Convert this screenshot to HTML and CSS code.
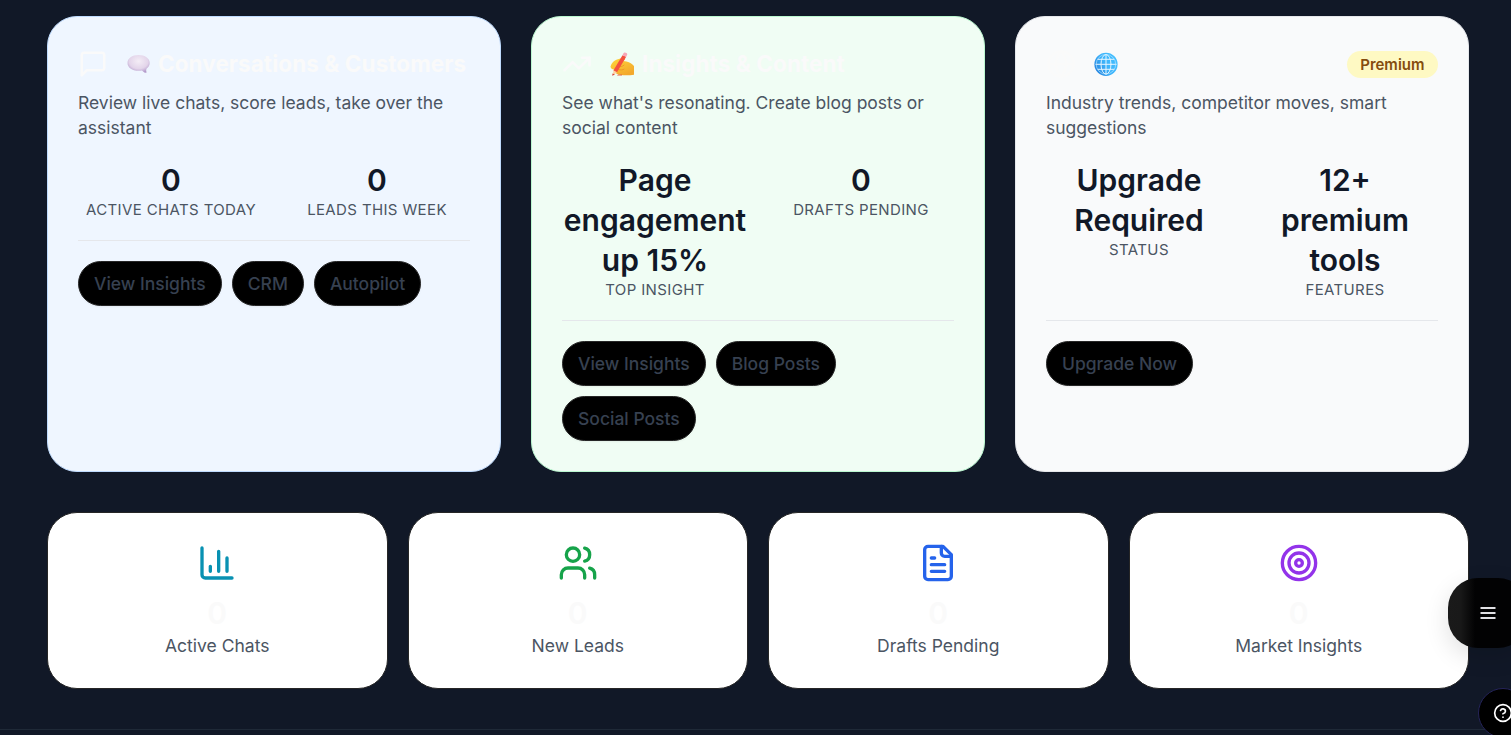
FILE: index.html
```html
<!DOCTYPE html>
<html lang="en">
<head>
<meta charset="utf-8">
<title>Dashboard</title>
<link rel="stylesheet" href="styles.css">
</head>
<body>
<main class="page">
  <section class="hubs">
    <article class="hub hub-blue">
      <header class="hub-head">
        <svg class="hub-icon" viewBox="0 0 24 24"><path d="M21 15a2 2 0 0 1-2 2H7l-4 4V5a2 2 0 0 1 2-2h14a2 2 0 0 1 2 2z"/></svg>
        <svg class="emoji" viewBox="0 0 24 24">
          <defs><radialGradient id="bubble" cx=".5" cy=".35" r=".65"><stop offset="0" stop-color="#f4edf6"/><stop offset=".65" stop-color="#e3d5ea"/><stop offset="1" stop-color="#b49bcb"/></radialGradient></defs>
          <path fill="url(#bubble)" d="M12.500 3C6 3 1.500 6.500 1.500 11s4.500 7.800 11 7.800c1.300 0 2.500-.1 3.500-.4 1 1.200 2.400 2.300 4 2.400.6 0 .6-.6.4-1.100-.3-.9-.3-2 .1-3 2-1.500 3.200-3.400 3.200-5.700 0-4.500-4.700-8-11.200-8z"/>
        </svg>
        <h3 class="hub-title">Conversations &amp; Customers</h3>
      </header>
      <p class="hub-desc">Review live chats, score leads, take over the assistant</p>
      <div class="stats">
        <div class="stat"><div class="stat-value">0</div><div class="stat-label">Active chats today</div></div>
        <div class="stat"><div class="stat-value">0</div><div class="stat-label">Leads this week</div></div>
      </div>
      <div class="actions"><button class="pill">View Insights</button><button class="pill">CRM</button><button class="pill">Autopilot</button></div>
    </article>

    <article class="hub hub-green">
      <header class="hub-head">
        <svg class="hub-icon" viewBox="0 0 24 24"><path d="M22 7l-8.500 8.500-5-5L2 17"/><path d="M16 7h6v6"/></svg>
        <svg class="emoji" viewBox="0 0 24 24">
          <defs><linearGradient id="hand" x1="0" y1="0" x2=".6" y2="1"><stop offset="0" stop-color="#ffd83b"/><stop offset="1" stop-color="#f3a92c"/></linearGradient></defs>
          <path fill="url(#hand)" d="M.5 14.500C1.500 11 4 8.500 7 7.500l6-1.700c2-.3 2.800 1.500 1.200 2.500l-1 .8 3.300.3c3.500.6 5.500 2.600 7.500 4.600v8.700c-3 .4-6 .6-9 .5-5 0-9-1-10-3.200-.5-1-.3-2 .2-2.800C3.500 18 1 17.500.5 14.500z"/>
          <path fill="none" stroke="#e99223" stroke-width=".8" d="M8 14.500c2 .6 4.500.1 6-1.300M8.500 17.500c2 .8 4 .5 5.500-.3"/>
          <path fill="#f4513f" d="M12.500 3.200l3.700 1.600L7 20.200 3.400 18.400z"/>
          <path fill="#f7a6b6" d="M12.500 3.200l1-1.900c.7-1.600 4.300-.2 3.700 1.500l-1 2z"/>
          <path fill="#ffd0a0" d="M3.400 18.400L7 20.200l-4 3.100z"/><path fill="#d9483b" d="M2.500 21.500l2.500.9-2.800 1.400z"/>
          <path fill="#e5623e" d="M8 22.500h4v1H7z"/>
        </svg>
        <h3 class="hub-title">Insights &amp; Content</h3>
      </header>
      <p class="hub-desc">See what's resonating. Create blog posts or social content</p>
      <div class="stats">
        <div class="stat"><div class="stat-value">Page engagement up 15%</div><div class="stat-label">Top insight</div></div>
        <div class="stat"><div class="stat-value">0</div><div class="stat-label">Drafts pending</div></div>
      </div>
      <div class="actions"><button class="pill">View Insights</button><button class="pill">Blog Posts</button><button class="pill">Social Posts</button></div>
    </article>

    <article class="hub hub-gray">
      <header class="hub-head">
        <svg class="hub-icon" viewBox="0 0 24 24"><circle cx="12" cy="12" r="10"/><path d="M12 2a14.500 14.500 0 0 0 0 20 14.500 14.500 0 0 0 0-20M2 12h20"/></svg>
        <svg class="emoji" viewBox="0 0 24 24">
          <defs><linearGradient id="globe" x1="0" y1=".8" x2="1" y2=".2"><stop offset="0" stop-color="#2580dc"/><stop offset=".5" stop-color="#3db4fb"/><stop offset="1" stop-color="#45c0ff"/></linearGradient></defs>
          <circle cx="12" cy="12.300" r="11.600" fill="url(#globe)"/>
          <g fill="none" stroke="#e6f6ff" stroke-width="1"><ellipse cx="12" cy="12.300" rx="5" ry="9.800"/><path d="M12 2.500v19.600M2 12.300h20M4 7.300h16M4 17.300h16"/></g>
          <circle cx="12" cy="12.300" r="9.800" fill="none" stroke="#c4e9ff" stroke-width=".6"/>
        </svg>
        <span class="badge">Premium</span>
      </header>
      <p class="hub-desc">Industry trends, competitor moves, smart suggestions</p>
      <div class="stats">
        <div class="stat"><div class="stat-value">Upgrade Required</div><div class="stat-label">Status</div></div>
        <div class="stat"><div class="stat-value">12+ premium tools</div><div class="stat-label">Features</div></div>
      </div>
      <div class="actions"><button class="pill">Upgrade Now</button></div>
    </article>
  </section>

  <section class="tiles">
    <div class="tile">
      <svg class="tile-icon cyan" viewBox="0 0 24 24"><path d="M3 3v16a2 2 0 0 0 2 2h16M18 17V9M13 17V5M8 17v-3"/></svg>
      <div class="tile-value">0</div><div class="tile-label">Active Chats</div>
    </div>
    <div class="tile">
      <svg class="tile-icon green" viewBox="0 0 24 24"><path d="M16 21v-2a4 4 0 0 0-4-4H6a4 4 0 0 0-4 4v2"/><circle cx="9" cy="7" r="4"/><path d="M22 21v-2a4 4 0 0 0-3-3.870M16 3.130a4 4 0 0 1 0 7.750"/></svg>
      <div class="tile-value">0</div><div class="tile-label">New Leads</div>
    </div>
    <div class="tile">
      <svg class="tile-icon blue" viewBox="0 0 24 24"><path d="M15 2H6a2 2 0 0 0-2 2v16a2 2 0 0 0 2 2h12a2 2 0 0 0 2-2V7z"/><path d="M14 2v4a2 2 0 0 0 2 2h4M10 9H8M16 13H8M16 17H8"/></svg>
      <div class="tile-value">0</div><div class="tile-label">Drafts Pending</div>
    </div>
    <div class="tile">
      <svg class="tile-icon purple" viewBox="0 0 24 24"><circle cx="12" cy="12" r="10"/><circle cx="12" cy="12" r="6"/><circle cx="12" cy="12" r="2"/></svg>
      <div class="tile-value">0</div><div class="tile-label">Market Insights</div>
    </div>
  </section>
  <footer class="footer"></footer>
</main>
<button class="fab-menu" aria-label="Menu"><svg viewBox="0 0 20 20"><path d="M2.500 5h15M2.500 10h15M2.500 15h15"/></svg></button>
<button class="fab-help" aria-label="Help"><svg viewBox="0 0 24 24"><circle cx="12" cy="12" r="10"/><path d="M9.090 9a3 3 0 0 1 5.830 1c0 2-3 3-3 3M12 17h.01"/></svg></button>
</body>
</html>
```

FILE: styles.css
```css
* { box-sizing: border-box; margin: 0; }
html, body { height: 735px; overflow: hidden; }
body { position: relative; background: #111827; font-family: Inter, "Liberation Sans", sans-serif; font-size: 17.5px; line-height: 25px; }
.page { display: flex; flex-direction: column; height: 735px; padding-top: 16px; }
svg { display: block; flex: none; fill: none; stroke-linecap: round; stroke-linejoin: round; }

.hubs { display: grid; grid-template-columns: repeat(3, 1fr); gap: 30px; height: 456px; margin: 0 42px 0 47px; }
.hub { border: 1px solid; border-radius: 30px; padding: 30px; }
.hub-blue { background: #eff6ff; border-color: #bfdbfe; }
.hub-green { background: #f0fdf4; border-color: #bbf7d0; }
.hub-gray { background: #f9fafb; border-color: #e5e7eb; }
.hub-head { display: flex; align-items: center; height: 34px; margin-bottom: 9px; }
.hub-icon { width: 30px; height: 30px; stroke: #fafafa; stroke-width: 2; }
.emoji { width: 24px; height: 24px; margin-left: 18px; }
.hub-title { margin-left: 8px; color: #fafafa; font-size: 22.5px; font-weight: 700; line-height: 34px; letter-spacing: .06px; white-space: nowrap; }
.badge { margin-left: auto; height: 27px; padding: 0 13.5px 0 13px; border-radius: 14px; background: #fef9c3; color: #854d0e; font-size: 15px; font-weight: 600; line-height: 27px; }
.hub-desc { color: #4b5563; margin-bottom: 20px; }

.stats { display: grid; grid-template-columns: 1fr 1fr; gap: 20px; padding-bottom: 20px; border-bottom: 1px solid #e5e7eb; }
.stat { min-width: 0; text-align: center; }
.stat-value { color: #111827; font-size: 30px; font-weight: 600; line-height: 40px; }
.stat-label { color: #4b5563; font-size: 15px; line-height: 20px; letter-spacing: .375px; text-transform: uppercase; white-space: nowrap; }
.actions { display: flex; flex-wrap: wrap; gap: 10px; padding-top: 20px; }
.pill { height: 45px; padding: 0 15px; border: 1px solid #262626; border-radius: 23px; background: #000; color: #374151; font: 500 17.5px/25px Inter, sans-serif; box-shadow: 0 1px 2px rgba(0, 0, 0, .05); }

.tiles { display: grid; grid-template-columns: repeat(4, 1fr); gap: 20px; margin: 40px 42px 0 47px; }
.tile { display: flex; flex-direction: column; align-items: center; height: 177px; padding: 30px; border: 1px solid #262626; border-radius: 30px; background: #fff; }
.tile-icon { width: 40px; height: 40px; margin-bottom: 10px; stroke: currentColor; stroke-width: 2; }
.cyan { color: #0891b2; }
.green { color: #16a34a; }
.blue { color: #2563eb; }
.purple { color: #9333ea; }
.tile-value { color: #fafafa; font-size: 30px; font-weight: 600; line-height: 40px; }
.tile-label { color: #4b5563; }
.footer { flex: 1; margin-top: 40px; border-top: 1px solid #1f2937; background: #111827; }

.fab-menu, .fab-help { position: absolute; padding: 0; display: flex; align-items: center; justify-content: center; }
.fab-menu { left: 1448px; top: 578px; width: 80px; height: 70px; border: 0; border-radius: 30px; background: linear-gradient(90deg, #1a1a1a 0, #191919 12px, #020203 27px, #020203 100%); box-shadow: 0 8px 24px rgba(0, 0, 0, .12); }
.fab-menu svg { width: 20px; height: 20px; stroke: #e0e0e4; stroke-width: 2; stroke-linecap: butt; }
.fab-help { left: 1478px; top: 688px; width: 50px; height: 50px; border: 1px solid #25245a; border-radius: 50%; background: #000; }
.fab-help svg { width: 20px; height: 20px; stroke: #fff; stroke-width: 2; }
```
